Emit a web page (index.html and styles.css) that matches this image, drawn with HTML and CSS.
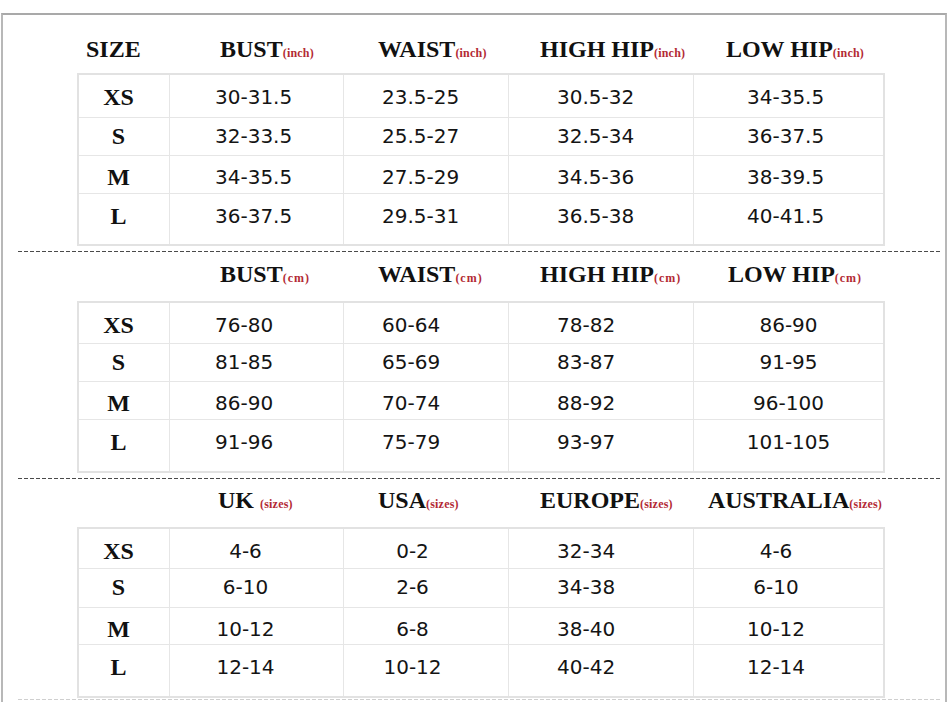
FILE: index.html
```html
<!DOCTYPE html>
<html lang="en">
<head>
<meta charset="utf-8">
<title>Size Chart</title>
<link rel="stylesheet" href="styles.css">
</head>
<body>
<div class="frame">
  <section class="block block-1">
    <div class="heads">
      <div class="h">SIZE</div>
      <div class="h">BUST<span class="unit">(inch)</span></div>
      <div class="h">WAIST<span class="unit">(inch)</span></div>
      <div class="h">HIGH HIP<span class="unit">(inch)</span></div>
      <div class="h h-last">LOW HIP<span class="unit">(inch)</span></div>
    </div>
    <div class="tbl tbl-inch">
      <div class="row r1"><div class="c sz">XS</div><div class="c c2">30-31.5</div><div class="c c3">23.5-25</div><div class="c c4">30.5-32</div><div class="c c5">34-35.5</div></div>
      <div class="row r2"><div class="c sz">S</div><div class="c c2">32-33.5</div><div class="c c3">25.5-27</div><div class="c c4">32.5-34</div><div class="c c5">36-37.5</div></div>
      <div class="row r3"><div class="c sz">M</div><div class="c c2">34-35.5</div><div class="c c3">27.5-29</div><div class="c c4">34.5-36</div><div class="c c5">38-39.5</div></div>
      <div class="row r4"><div class="c sz">L</div><div class="c c2">36-37.5</div><div class="c c3">29.5-31</div><div class="c c4">36.5-38</div><div class="c c5">40-41.5</div></div>
    </div>
  </section>
  <div class="dash"></div>
  <section class="block block-2">
    <div class="heads">
      <div class="h"></div>
      <div class="h">BUST<span class="unit unit-cm">(cm)</span></div>
      <div class="h">WAIST<span class="unit unit-cm">(cm)</span></div>
      <div class="h">HIGH HIP<span class="unit unit-cm">(cm)</span></div>
      <div class="h h-last">LOW HIP<span class="unit unit-cm">(cm)</span></div>
    </div>
    <div class="tbl tbl-cm">
      <div class="row r1"><div class="c sz">XS</div><div class="c c2">76-80</div><div class="c c3">60-64</div><div class="c c4">78-82</div><div class="c c5">86-90</div></div>
      <div class="row r2"><div class="c sz">S</div><div class="c c2">81-85</div><div class="c c3">65-69</div><div class="c c4">83-87</div><div class="c c5">91-95</div></div>
      <div class="row r3"><div class="c sz">M</div><div class="c c2">86-90</div><div class="c c3">70-74</div><div class="c c4">88-92</div><div class="c c5">96-100</div></div>
      <div class="row r4"><div class="c sz">L</div><div class="c c2">91-96</div><div class="c c3">75-79</div><div class="c c4">93-97</div><div class="c c5">101-105</div></div>
    </div>
  </section>
  <div class="dash"></div>
  <section class="block block-3">
    <div class="heads">
      <div class="h"></div>
      <div class="h h-uk">UK <span class="unit">(sizes)</span></div>
      <div class="h">USA<span class="unit">(sizes)</span></div>
      <div class="h">EUROPE<span class="unit">(sizes)</span></div>
      <div class="h h-last">AUSTRALIA<span class="unit">(sizes)</span></div>
    </div>
    <div class="tbl tbl-sizes">
      <div class="row r1"><div class="c sz">XS</div><div class="c c2">4-6</div><div class="c c3">0-2</div><div class="c c4">32-34</div><div class="c c5">4-6</div></div>
      <div class="row r2"><div class="c sz">S</div><div class="c c2">6-10</div><div class="c c3">2-6</div><div class="c c4">34-38</div><div class="c c5">6-10</div></div>
      <div class="row r3"><div class="c sz">M</div><div class="c c2">10-12</div><div class="c c3">6-8</div><div class="c c4">38-40</div><div class="c c5">10-12</div></div>
      <div class="row r4"><div class="c sz">L</div><div class="c c2">12-14</div><div class="c c3">10-12</div><div class="c c4">40-42</div><div class="c c5">12-14</div></div>
    </div>
  </section>
  <div class="dash dash-faint"></div>
</div>
</body>
</html>
```

FILE: styles.css
```css
* { box-sizing: border-box; }

html, body {
  margin: 0;
  padding: 0;
  background: #ffffff;
  overflow: hidden;
}

body {
  width: 950px;
  height: 702px;
  font-family: "Liberation Serif", "Times New Roman", serif;
  color: #111;
}

.frame {
  margin: 13px 0 0 1px;
  width: 946px;
  height: 720px;
  border: 2px solid #b8b8b8;
  border-bottom: 0;
  border-top-color: #a9a9a9;
}

.block-1 { padding-top: 20px; }
.block-2 { padding-top: 8px; }
.block-3 { padding-top: 7px; }

.heads {
  display: grid;
  grid-template-columns: 134px 158px 162px 160px 190px;
  margin-left: 83px;
  height: 28px;
  line-height: 28px;
  font-size: 24px;
  font-weight: bold;
  white-space: nowrap;
}

.h-uk { margin-left: -2px; }
.h-last { text-align: center; }

.unit {
  font-size: 12px;
  font-weight: bold;
  color: #b32a34;
  letter-spacing: 0.2px;
}
.unit-cm { letter-spacing: 1px; }

.tbl {
  display: grid;
  grid-template-columns: 91px 174px 165px 185px 189px;
  width: 808px;
  margin-left: 74px;
  border: 2px solid #e2e2e2;
}
.block-1 .tbl { margin-top: 10px; grid-template-rows: 43px 38px 38px 50px; }
.block-2 .tbl { margin-top: 13px; grid-template-rows: 41px 38px 38px 51px; }
.block-3 .tbl { margin-top: 13px; grid-template-rows: 40px 39px 37px 51px; }

.row { display: contents; }

.c {
  border-right: 1px solid #e6e6e6;
  border-bottom: 1px solid #e6e6e6;
  font-family: "DejaVu Sans", Verdana, sans-serif;
  font-size: 20px;
  line-height: 24px;
  color: #141414;
  white-space: nowrap;
}
.c:last-child { border-right: 0; }
.r4 .c { border-bottom: 0; }

.r1 .c { padding-top: 10px; }
.r2 .c { padding-top: 6px; }
.r3 .c { padding-top: 9px; }
.r4 .c { padding-top: 10px; }

.sz {
  font-family: "Liberation Serif", "Times New Roman", serif;
  font-weight: bold;
  font-size: 24px;
  text-align: center;
  padding-right: 11px;
  color: #111;
}

.c2 { padding-left: 45px; }
.c3 { padding-left: 38px; }
.c4 { padding-left: 48px; }
.c5 { padding-left: 53px; }

.tbl-cm .c5 { padding-left: 0; text-align: center; }

.tbl-sizes .c2 { padding-left: 0; padding-right: 22px; text-align: center; }
.tbl-sizes .c3 { padding-left: 0; padding-right: 27px; text-align: center; }
.tbl-sizes .c5 { padding-left: 0; padding-right: 25px; text-align: center; }

.dash {
  margin: 5px 0 0 15px;
  width: 922px;
  height: 1px;
  background: repeating-linear-gradient(to right, #4a4a4a 0 4px, transparent 4px 6px);
}
.dash-faint {
  margin-top: 1px;
  background: repeating-linear-gradient(to right, #cfcfcf 0 4px, transparent 4px 6px);
}
```
